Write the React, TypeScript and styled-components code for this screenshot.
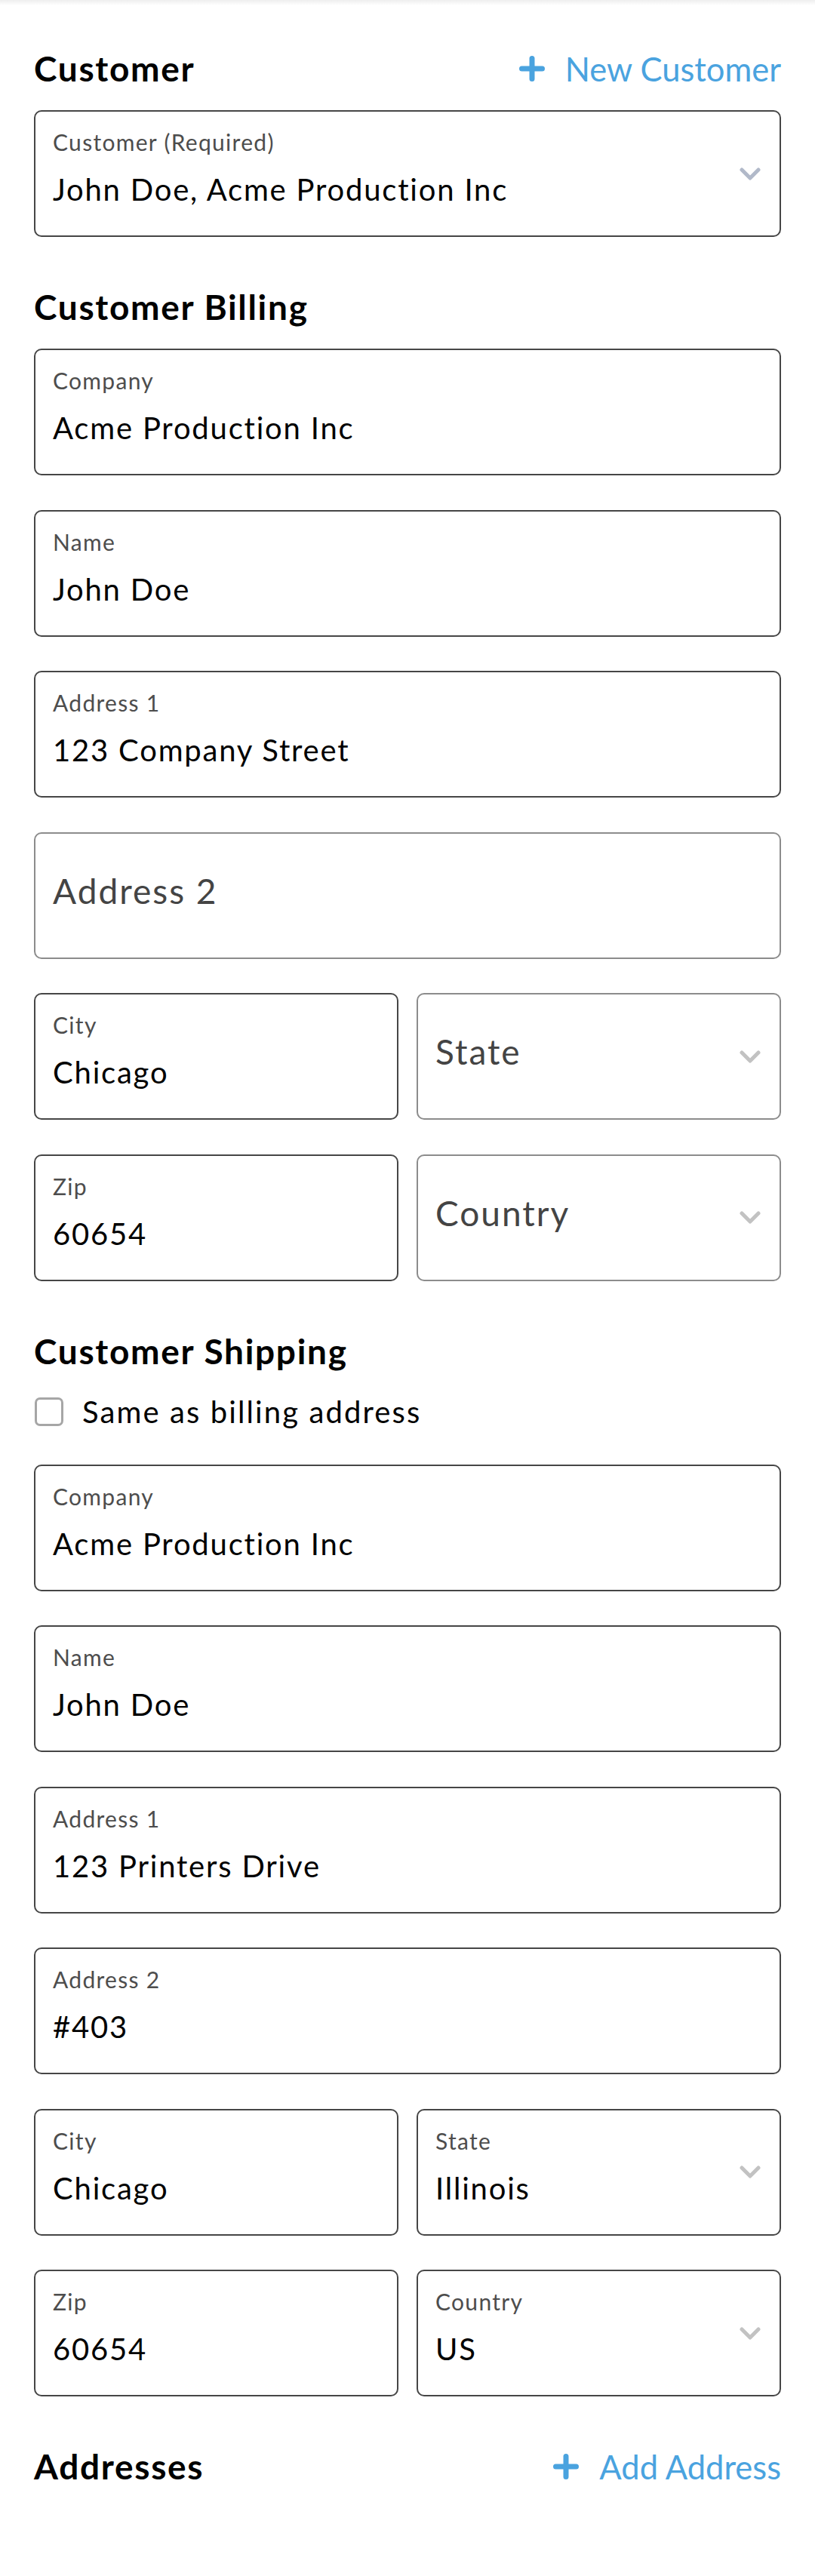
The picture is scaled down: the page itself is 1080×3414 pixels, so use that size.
import React from 'react'
import styled, { createGlobalStyle } from 'styled-components'

const GlobalStyle = createGlobalStyle`
  html, body {
    margin: 0;
    padding: 0;
    background: #fff;
  }
  body {
    font-family: Lato, 'Open Sans', sans-serif;
    color: #000;
  }
`

const Page = styled.div`
  min-height: 3414px;
  box-sizing: border-box;
  padding: 63px 45px 0;
  background: linear-gradient(#eeeeee, #ffffff 7px);
`

const Section = styled.section`
  & + & {
    margin-top: 65px;
  }
`

const SectionHeader = styled.div`
  display: flex;
  align-items: center;
  justify-content: space-between;
  height: 56px;
  margin-bottom: 27px;
`

const Title = styled.h2`
  margin: 0;
  font-size: 46px;
  font-weight: 700;
  line-height: 56px;
  letter-spacing: 1.7px;
  color: #000;
`

const ActionLink = styled.a`
  display: flex;
  align-items: center;
  gap: 27px;
  font-size: 43.5px;
  line-height: 56px;
  color: #4aa3df;
  text-decoration: none;
  cursor: pointer;
`

const Stack = styled.div`
  display: flex;
  flex-direction: column;
  gap: 45.5px;
`

const Pair = styled.div`
  display: grid;
  grid-template-columns: 1fr 1fr;
  gap: 24px;
`

const FieldBox = styled.div<{ $empty?: boolean }>`
  display: flex;
  align-items: center;
  box-sizing: border-box;
  height: 168px;
  padding: 0 25px 0 23px;
  border: 2.5px solid ${(p) => (p.$empty ? '#8c8c8c' : '#464646')};
  border-radius: 10px;
  background: #fff;
`

const FieldContent = styled.div<{ $empty?: boolean }>`
  flex: 1;
  display: flex;
  flex-direction: column;
  align-self: flex-start;
  padding-top: ${(p) => (p.$empty ? '48px' : '22px')};
`

const Label = styled.span`
  font-size: 30px;
  line-height: 36px;
  letter-spacing: 1.3px;
  color: #4d4d4d;
`

const Value = styled.span`
  margin-top: 21px;
  font-size: 40px;
  line-height: 48px;
  letter-spacing: 1.8px;
  color: #000;
`

const Placeholder = styled.span`
  font-size: 46px;
  line-height: 56px;
  letter-spacing: 2px;
  color: #444;
`

const Chevron = styled.svg<{ $tint?: string }>`
  flex: none;
  width: 28px;
  height: 17px;
  color: ${(p) => p.$tint || '#c2c2c2'};
`

const CheckRow = styled.label`
  display: flex;
  align-items: center;
  gap: 25px;
  height: 50px;
  margin-bottom: 45px;
  font-size: 40px;
  letter-spacing: 2.1px;
  color: #000;
`

const CheckBox = styled.span`
  box-sizing: border-box;
  width: 38px;
  height: 38px;
  margin-left: 1px;
  border: 3px solid #a6a6a6;
  border-radius: 7px;
`

const PlusIcon = () => (
  <svg width="34" height="34" viewBox="0 0 34 34">
    <path d="M17 3.5v27M3.5 17h27" stroke="#4aa3df" strokeWidth="7" strokeLinecap="round" />
  </svg>
)

type FieldProps = {
  label: string
  value?: string
  select?: boolean
  tint?: string
}

const Field = ({ label, value, select, tint }: FieldProps) => {
  const empty = !value
  return (
    <FieldBox $empty={empty}>
      <FieldContent $empty={empty}>
        {empty ? (
          <Placeholder>{label}</Placeholder>
        ) : (
          <>
            <Label>{label}</Label>
            <Value>{value}</Value>
          </>
        )}
      </FieldContent>
      {select && (
        <Chevron $tint={tint} viewBox="0 0 28 17">
          <path d="M3 3l11 11L25 3" fill="none" stroke="currentColor" strokeWidth="5" strokeLinecap="round" strokeLinejoin="round" />
        </Chevron>
      )}
    </FieldBox>
  )
}

const App = () => {
  return (
    <>
      <GlobalStyle />
      <Page>
        <Section>
          <SectionHeader>
            <Title>Customer</Title>
            <ActionLink>
              <PlusIcon />
              New Customer
            </ActionLink>
          </SectionHeader>
          <Field label="Customer (Required)" value="John Doe, Acme Production Inc" select tint="#b1b9c9" />
        </Section>

        <Section>
          <SectionHeader>
            <Title>Customer Billing</Title>
          </SectionHeader>
          <Stack>
            <Field label="Company" value="Acme Production Inc" />
            <Field label="Name" value="John Doe" />
            <Field label="Address 1" value="123 Company Street" />
            <Field label="Address 2" />
            <Pair>
              <Field label="City" value="Chicago" />
              <Field label="State" select />
            </Pair>
            <Pair>
              <Field label="Zip" value="60654" />
              <Field label="Country" select />
            </Pair>
          </Stack>
        </Section>

        <Section>
          <SectionHeader>
            <Title>Customer Shipping</Title>
          </SectionHeader>
          <CheckRow>
            <CheckBox />
            Same as billing address
          </CheckRow>
          <Stack>
            <Field label="Company" value="Acme Production Inc" />
            <Field label="Name" value="John Doe" />
            <Field label="Address 1" value="123 Printers Drive" />
            <Field label="Address 2" value="#403" />
            <Pair>
              <Field label="City" value="Chicago" />
              <Field label="State" value="Illinois" select />
            </Pair>
            <Pair>
              <Field label="Zip" value="60654" />
              <Field label="Country" value="US" select />
            </Pair>
          </Stack>
        </Section>

        <Section>
          <SectionHeader>
            <Title>Addresses</Title>
            <ActionLink>
              <PlusIcon />
              Add Address
            </ActionLink>
          </SectionHeader>
        </Section>
      </Page>
    </>
  )
}

export default App
